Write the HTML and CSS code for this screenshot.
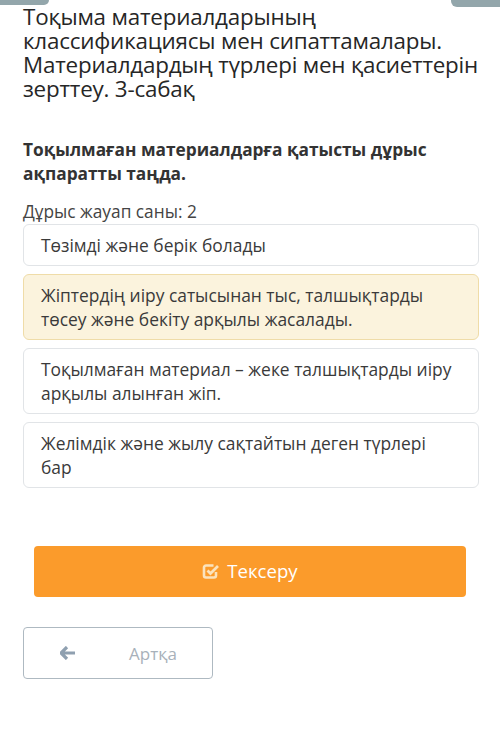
FILE: index.html
```html
<!DOCTYPE html>
<html lang="kk">
<head>
    <meta charset="UTF-8">
    <meta name="viewport" content="width=device-width, initial-scale=1.0">
    <title>Тексеру</title>
    <link rel="stylesheet" href="styles.css">
</head>
<body>
    <div class="top-tabs">
        <span class="tab tab-left"></span>
        <span class="tab tab-right"></span>
    </div>
    <section class="quiz">
        <h1 class="lesson-title">Тоқыма материалдарының классификациясы мен сипаттамалары. Материалдардың түрлері мен қасиеттерін зерттеу. 3-сабақ</h1>
        <h2 class="question">Тоқылмаған материалдарға қатысты дұрыс ақпаратты таңда.</h2>
        <p class="answer-count">Дұрыс жауап саны: 2</p>
        <div class="options">
            <div class="option">Төзімді және берік болады</div>
            <div class="option selected">Жіптердің иіру сатысынан тыс, талшықтарды төсеу және бекіту арқылы жасалады.</div>
            <div class="option">Тоқылмаған материал – жеке талшықтарды иіру арқылы алынған жіп.</div>
            <div class="option">Желімдік және жылу сақтайтын деген түрлері бар</div>
        </div>
        <button class="check-button" type="button">
            <svg class="check-icon" width="18" height="18" viewBox="0 0 18 18" aria-hidden="true">
                <path d="M14 10v3.5a2 2 0 0 1-2 2H4a2 2 0 0 1-2-2V5.5a2 2 0 0 1 2-2h7.5" fill="none" stroke="currentColor" stroke-width="2.6"/>
                <path d="M5.5 8.5l3 3 7.5-7.5" fill="none" stroke="currentColor" stroke-width="2.8"/>
            </svg>
            Тексеру
        </button>
        <button class="back-button" type="button">
            <svg class="back-icon" width="16" height="14" viewBox="0 0 16 14" aria-hidden="true">
                <path d="M7 1 1 7l6 6M1.5 7H15" fill="none" stroke="currentColor" stroke-width="3.2" stroke-linejoin="round"/>
            </svg>
            <span>Артқа</span>
        </button>
    </section>
</body>
</html>
```

FILE: styles.css
```css
body {
    margin: 0;
    padding: 0;
    font-family: 'Open Sans', 'Noto Sans', sans-serif;
    background-color: white;
    color: #2b2b2b;
}
.top-tabs {
    display: flex;
    justify-content: space-between;
    height: 0;
}
.tab {
    display: block;
    width: 49px;
    background-color: #93a6ab;
}
.tab-left {
    height: 5px;
    border-bottom-right-radius: 5px;
}
.tab-right {
    height: 7px;
    border-bottom-left-radius: 6px;
}
.quiz {
    padding: 5px 21px 0 23px;
}
.lesson-title {
    margin: 0 -8px 0 0;
    font-size: 22.4px;
    font-weight: 400;
    line-height: 24px;
    letter-spacing: -0.2px;
    color: #262626;
}
.question {
    margin: 37px 0 0;
    font-size: 17.3px;
    font-weight: 700;
    line-height: 24px;
    color: #333;
}
.answer-count {
    margin: 16px 0 0;
    font-size: 17.3px;
    line-height: 20px;
    color: #444;
}
.options {
    display: flex;
    flex-direction: column;
    gap: 8px;
    margin-top: 2px;
}
.option {
    padding: 8px 22px 8px 17px;
    border: 1px solid #e1e4e7;
    border-radius: 6px;
    background-color: white;
    font-size: 17.4px;
    line-height: 24px;
    color: #3a3a3a;
}
.option.selected {
    background-color: #fbf3dd;
    border-color: #efdca8;
}
.check-button {
    display: flex;
    align-items: center;
    justify-content: center;
    gap: 7px;
    width: 432px;
    height: 51px;
    margin: 58px 0 0 11px;
    border: none;
    border-radius: 4px;
    background-color: #fb9b2b;
    color: white;
    font-family: inherit;
    font-size: 18.6px;
    padding: 0 0 2px;
}
.check-icon {
    color: #fbe3bd;
}
.back-button {
    display: flex;
    align-items: center;
    width: 190px;
    height: 52px;
    margin-top: 30px;
    padding: 0 0 0 36px;
    border: 1.5px solid #aeb9c1;
    border-radius: 4px;
    background-color: white;
    color: #9daab5;
    font-family: inherit;
    font-size: 17px;
}
.back-icon {
    color: #8fa0b0;
}
.back-button span {
    margin-left: 53px;
    color: #a8b1ba;
}
```
